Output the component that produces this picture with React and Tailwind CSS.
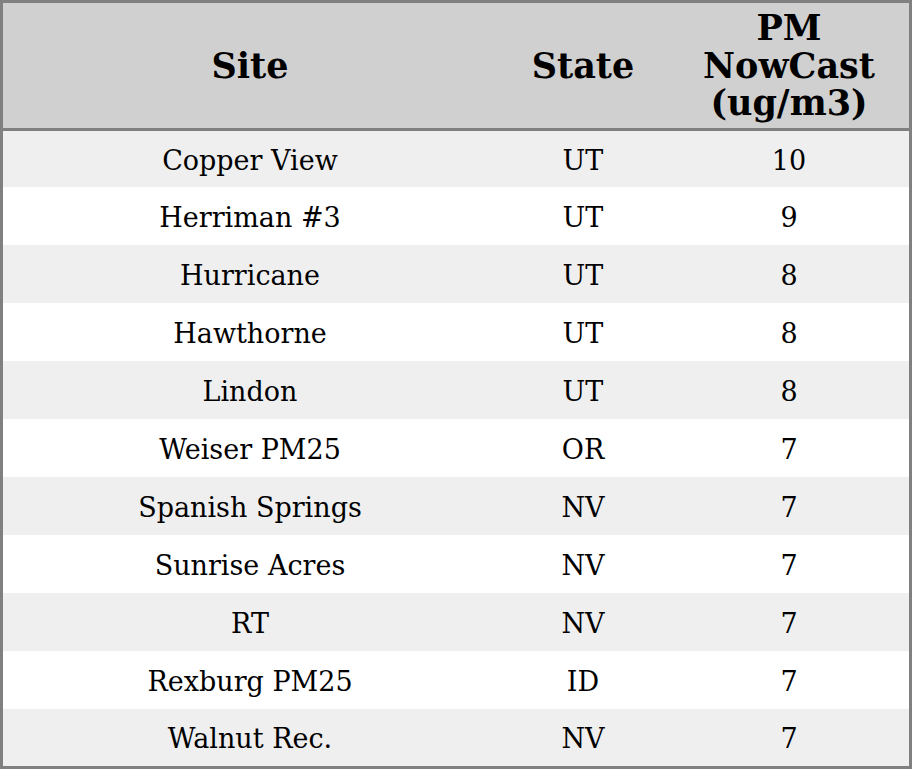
const ROWS = [
  ['Copper View', 'UT', '10'],
  ['Herriman #3', 'UT', '9'],
  ['Hurricane', 'UT', '8'],
  ['Hawthorne', 'UT', '8'],
  ['Lindon', 'UT', '8'],
  ['Weiser PM25', 'OR', '7'],
  ['Spanish Springs', 'NV', '7'],
  ['Sunrise Acres', 'NV', '7'],
  ['RT', 'NV', '7'],
  ['Rexburg PM25', 'ID', '7'],
  ['Walnut Rec.', 'NV', '7'],
]

export default function App() {
  return (
    <div className="w-[912px] h-[769px] bg-white text-black font-['DejaVu_Serif',serif]">
      <div className="border-[3px] border-[#808080] flex flex-col">
        {/* Header */}
        <div className="grid grid-cols-[494px_172px_240px] h-[128px] bg-[#d0d0d0] border-b-[3px] border-[#808080] font-bold text-[35px] leading-[37.5px]">
          <div className="flex items-center justify-center">Site</div>
          <div className="flex items-center justify-center">State</div>
          <div className="flex items-center justify-center text-center">
            PM<br />NowCast<br />(ug/m3)
          </div>
        </div>

        {/* Body */}
        {ROWS.map((r, i) => (
          <div
            key={i}
            className={`grid grid-cols-[494px_172px_240px] pt-[4px] text-[27px] ${i % 2 === 0 ? 'bg-[#efefef]' : 'bg-white'} ${i === 0 ? 'h-[56px]' : i === ROWS.length - 1 ? 'h-[57px]' : 'h-[58px]'}`}
          >
            <div className="flex items-center justify-center">{r[0]}</div>
            <div className="flex items-center justify-center">{r[1]}</div>
            <div className="flex items-center justify-center">{r[2]}</div>
          </div>
        ))}
      </div>
    </div>
  )
}
